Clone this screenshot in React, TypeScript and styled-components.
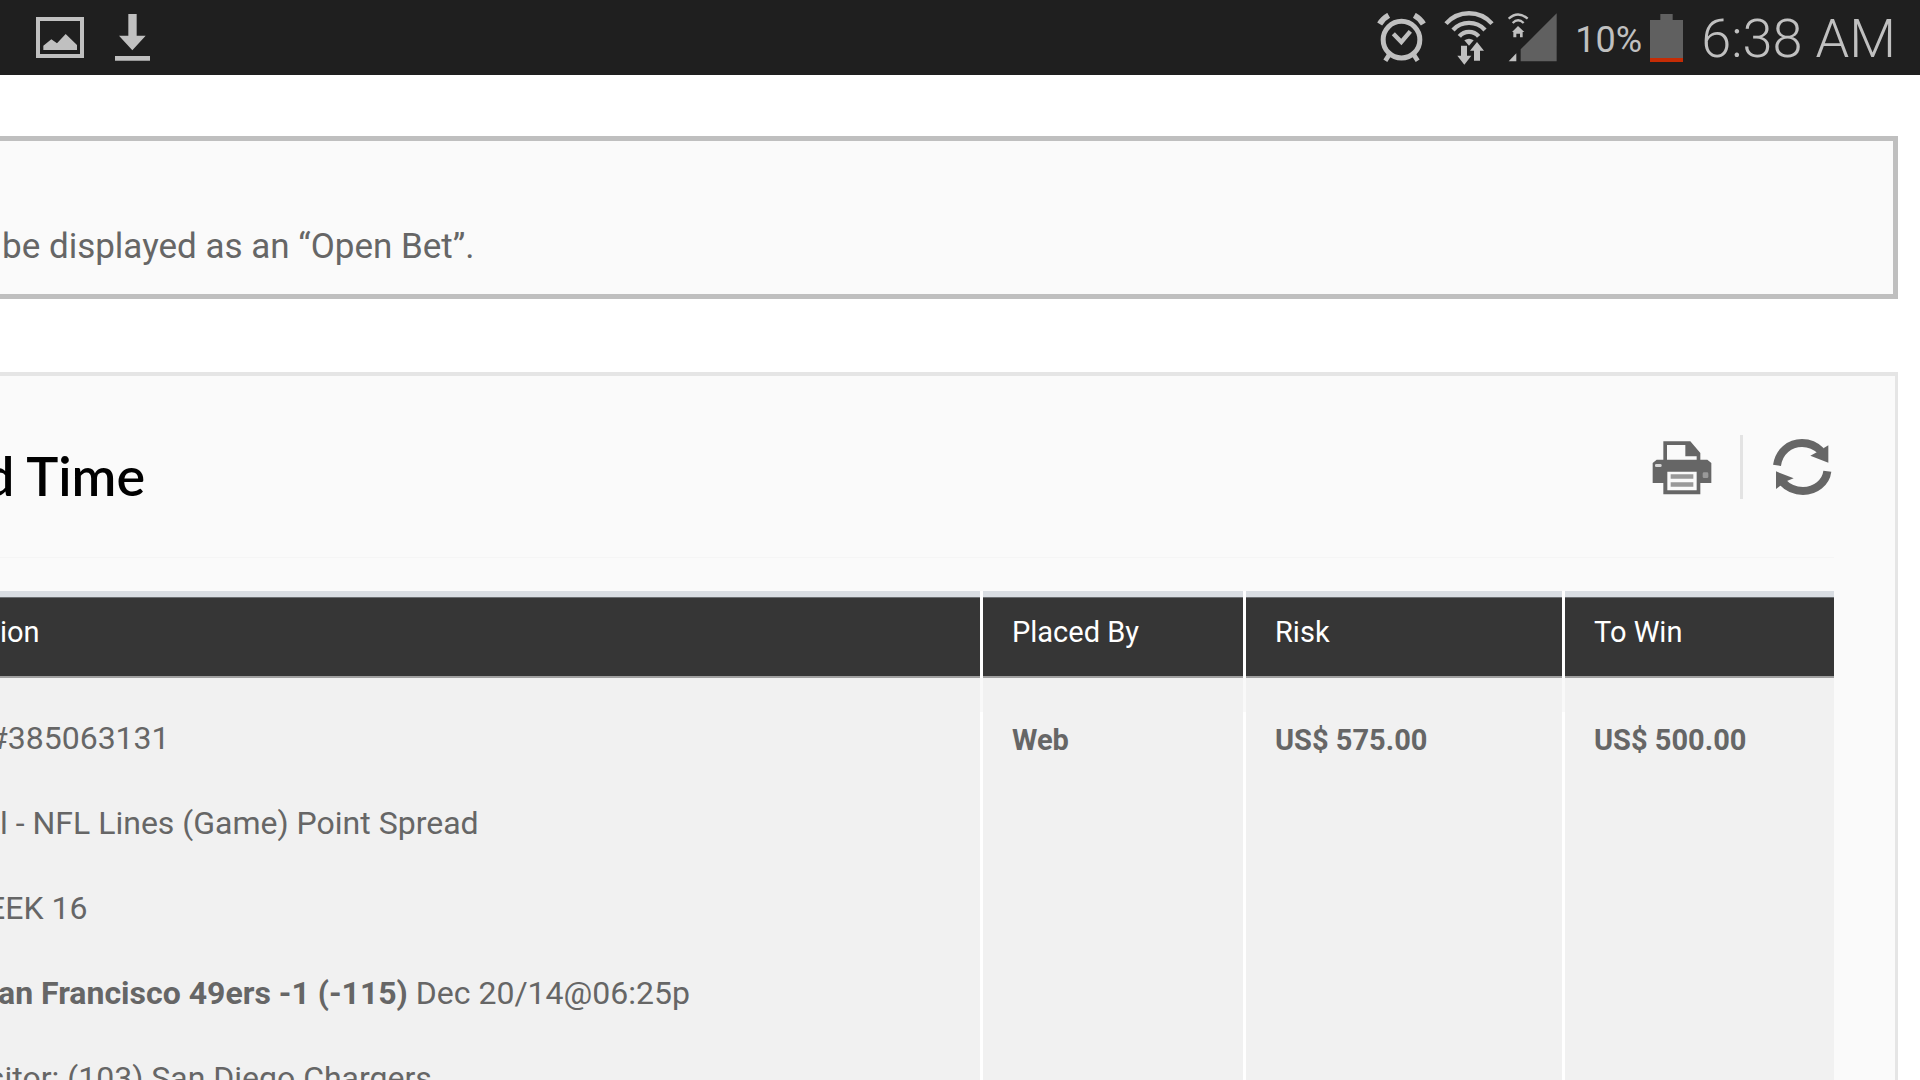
import React from "react";
import styled, { createGlobalStyle } from "styled-components";

const GlobalStyle = createGlobalStyle`
  *, *::before, *::after { box-sizing: border-box; }
  body {
    margin: 0;
    background: #fff;
    color: #666;
    font-family: Roboto, "Liberation Sans", sans-serif;
  }
`;

const Screen = styled.div`
  height: 100vh;
  overflow: hidden;
  display: flex;
  flex-direction: column;
`;

const StatusBar = styled.header`
  flex: none;
  height: 75px;
  padding: 0 24px 0 36px;
  display: flex;
  justify-content: space-between;
  background: #1f1f1f;
  color: #c0c0c0;
`;

const StatusGroup = styled.div<{ $gap: number }>`
  display: flex;
  align-items: center;
  gap: ${(p) => p.$gap}px;
`;

const Glyph = styled.svg`
  display: block;
  flex: none;
`;

const Battery = styled.span`
  display: flex;
  align-items: center;
  gap: 8px;
  font-size: 36px;
  line-height: 42px;
`;

const Percent = styled.span`
  padding-top: 4px;
`;

const Clock = styled.time`
  padding-top: 2px;
  font-size: 54px;
  line-height: 64px;
  font-weight: 300;
`;

const Page = styled.main`
  flex: 1;
  min-height: 0;
  overflow: hidden;
  padding: 61px 22px 0 0;
`;

const Notice = styled.section`
  height: 163px;
  border: 5px solid #bfbfbf;
  border-left: 0;
  background: #fafafa;
  padding: 85px 0 0 2px;
`;

const NoticeText = styled.p`
  margin: 0;
  font-size: 35px;
  line-height: 42px;
`;

const Panel = styled.section`
  margin-top: 73px;
  min-height: 100%;
  border: solid #e5e5e5;
  border-width: 4px 3px 0 0;
  background: #fafafa;
  padding-right: 61px;
`;

const PanelHead = styled.div`
  height: 182px;
  margin-bottom: 33px;
  display: flex;
  align-items: center;
  justify-content: space-between;
  border-bottom: 1px solid #f5f5f5;
`;

const Title = styled.h1`
  margin: 0;
  padding-top: 18px;
  color: #000;
  font-family: Lato, "Open Sans", sans-serif;
  font-size: 54px;
  line-height: 60px;
  font-weight: 600;
`;

const Tools = styled.div`
  display: flex;
  align-items: center;
  padding-right: 2px;
`;

const ToolButton = styled.button`
  padding: 1px 0 0;
  border: 0;
  background: none;
  color: #666;
  cursor: pointer;
`;

const Divider = styled.span`
  width: 3px;
  height: 64px;
  margin: 0 29px 0 28px;
  background: #e3e3e3;
`;

const Bets = styled.table`
  width: 100%;
  table-layout: fixed;
  border-collapse: separate;
  border-spacing: 0;
  text-align: left;
`;

const Col = styled.col<{ $width?: number }>`
  width: ${(p) => (p.$width ? `${p.$width}px` : "auto")};
`;

const HeadCell = styled.th`
  height: 87px;
  padding: 24px 0 0 32px;
  vertical-align: top;
  color: #fff;
  font-size: 29px;
  line-height: 34px;
  font-weight: 400;
  background:
    linear-gradient(#fff, #fff) left / 3px 100% no-repeat,
    linear-gradient(#d9dde2 6px, #6b6e71 6px 7px, #363636 7px 85px, #a0a0a0 85px);

  &:first-child {
    padding-left: 0;
    background: linear-gradient(#d9dde2 6px, #6b6e71 6px 7px, #363636 7px 85px, #a0a0a0 85px);
  }
`;

const BodyCell = styled.td`
  padding: 45px 0 0 32px;
  vertical-align: top;
  font-size: 29px;
  line-height: 34px;
  font-weight: 700;
  background: linear-gradient(#f9f9f9 34px, #fff 34px) left / 3px 100% no-repeat, #f1f1f1;

  &:first-child {
    padding: 18px 0 0;
    background: #f1f1f1;
  }
`;

/* The view is panned sideways, so a line may begin beyond the left edge. */
const Line = styled.p<{ $pan?: number }>`
  margin: 0;
  text-indent: ${(p) => -(p.$pan ?? 0)}px;
  font-size: 32px;
  line-height: 85px;
  font-weight: 400;
  white-space: nowrap;
`;

const Panned = styled.span<{ $pan: number }>`
  display: block;
  text-indent: ${(p) => -p.$pan}px;
`;

const PictureIcon = () => (
  <Glyph width="48" height="41" viewBox="108 54 144 123" fill="currentColor">
    <path d="M114 60H246V171H114Z" fill="none" stroke="currentColor" strokeWidth="12" />
    <path d="M130 153V140L154 121L171 133L197 105L231 138V153Z" />
  </Glyph>
);

const DownloadIcon = () => (
  <Glyph width="35" height="47" viewBox="345 46 105 141" fill="currentColor">
    <path d="M385 46H410V111H437L397 155L357 111H385ZM345 172H450V186H345Z" />
  </Glyph>
);

const AlarmIcon = () => (
  <Glyph width="49" height="49" viewBox="49 41 147 147" fill="none" stroke="currentColor">
    <circle cx="122.5" cy="121" r="55" strokeWidth="15" />
    <path d="M98 103L122 128L149 96" strokeWidth="13" />
    <path d="M57 74Q66 58 84 48M188 74Q179 58 161 48" strokeWidth="17" />
    <path d="M87 164L74 184M158 164L171 184" strokeWidth="14" />
  </Glyph>
);

const WifiIcon = () => (
  <Glyph width="50" height="54" viewBox="255 31 150 162" fill="currentColor">
    <g fill="none" stroke="currentColor" strokeWidth="13">
      <path d="M261 69A92 92 0 0 1 399 69" />
      <path d="M282 88A65 65 0 0 1 378 88" />
      <path d="M301 107A38 38 0 0 1 359 107" />
    </g>
    <path d="M330 135L316 119Q330 109 344 119Z" />
    <path d="M354 118L381 153H363V184H341V153H329Z" fill="#1f1f1f" />
    <path d="M306 135H324V165H337L316 192L295 165H306Z" />
    <path d="M354 124L375 150H363V180H345V150H333Z" />
  </Glyph>
);

const SignalIcon = () => (
  <Glyph width="49" height="49" viewBox="445 41 147 147" fill="currentColor">
    <path d="M483 186V150L591 42V186Z" fill="#606060" />
    <path d="M447 186L470 162V186Z" />
    <g fill="none" stroke="currentColor" strokeWidth="7">
      <path d="M447 58Q475 33 504 58" />
      <path d="M459 71Q475 55 492 71" />
    </g>
    <path d="M475 80L494 98H489V114H481V103H470V114H461V98H457Z" />
  </Glyph>
);

const BatteryIcon = () => (
  <Glyph width="33" height="48" viewBox="270 39 99 144">
    <path d="M301 39H338V57H369V172H270V57H301Z" fill="#606060" />
    <path d="M270 171H369V183H270Z" fill="#c52c05" />
  </Glyph>
);

const PrintIcon = () => (
  <Glyph width="60" height="55" viewBox="96 275 180 165" fill="currentColor">
    <path d="M130 279H211L241 314V334H262L274 344V404H241V438H130V404H98V344L110 334H130Z" />
    <path d="M141 290H196V324H230V334H141ZM142 370H230V426H142Z" fill="#fafafa" />
    <path d="M152 378H220V391H152ZM152 402H220V415H152Z" fill="#999" />
    <rect x="105" y="347" width="20" height="9" rx="4" fill="#d8d8d8" />
    <rect x="248" y="372" width="17" height="17" rx="4" fill="#999" />
  </Glyph>
);

const RefreshIcon = () => (
  <Glyph width="60" height="58" viewBox="455 266 180 174" fill="currentColor">
    <g fill="none" stroke="currentColor" strokeWidth="24">
      <path d="M470 348C476 306 508 281 545 281C568 281 586 289 602 305" />
      <path d="M621 366C617 400 585 425 548 425C523 425 502 415 487 399" />
    </g>
    <path d="M624 288V340L570 319L592 307Z" />
    <path d="M467 366V419L498 396L520 387Z" />
  </Glyph>
);

const details = [
  { text: "#385063131", pan: 12 },
  { text: "l - NFL Lines (Game) Point Spread", pan: 0 },
  { text: "EEK 16", pan: 13 },
  { pick: "an Francisco 49ers -1 (-115)", text: " Dec 20/14@06:25p", pan: 2 },
  { text: "sitor: (103) San Diego Chargers", pan: 12 },
];

export default function App() {
  return (
    <Screen>
      <GlobalStyle />
      <StatusBar>
        <StatusGroup $gap={31}>
          <PictureIcon />
          <DownloadIcon />
        </StatusGroup>
        <StatusGroup $gap={18}>
          <AlarmIcon />
          <StatusGroup $gap={14}>
            <WifiIcon />
            <SignalIcon />
          </StatusGroup>
          <Battery>
            <Percent>10%</Percent>
            <BatteryIcon />
          </Battery>
          <Clock>6:38 AM</Clock>
        </StatusGroup>
      </StatusBar>
      <Page>
        <Notice>
          <NoticeText>be displayed as an “Open Bet”.</NoticeText>
        </Notice>
        <Panel>
          <PanelHead>
            <Title>
              <Panned $pan={16}>d Time</Panned>
            </Title>
            <Tools>
              <ToolButton type="button" aria-label="Print">
                <PrintIcon />
              </ToolButton>
              <Divider />
              <ToolButton type="button" aria-label="Refresh">
                <RefreshIcon />
              </ToolButton>
            </Tools>
          </PanelHead>
          <Bets>
            <colgroup>
              <Col />
              <Col $width={263} />
              <Col $width={319} />
              <Col $width={272} />
            </colgroup>
            <thead>
              <tr>
                <HeadCell scope="col">ion</HeadCell>
                <HeadCell scope="col">Placed By</HeadCell>
                <HeadCell scope="col">Risk</HeadCell>
                <HeadCell scope="col">To Win</HeadCell>
              </tr>
            </thead>
            <tbody>
              <tr>
                <BodyCell>
                  {details.map((d) => (
                    <Line key={d.text} $pan={d.pan}>
                      {d.pick && <strong>{d.pick}</strong>}
                      {d.text}
                    </Line>
                  ))}
                </BodyCell>
                <BodyCell>Web</BodyCell>
                <BodyCell>US$ 575.00</BodyCell>
                <BodyCell>US$ 500.00</BodyCell>
              </tr>
            </tbody>
          </Bets>
        </Panel>
      </Page>
    </Screen>
  );
}
